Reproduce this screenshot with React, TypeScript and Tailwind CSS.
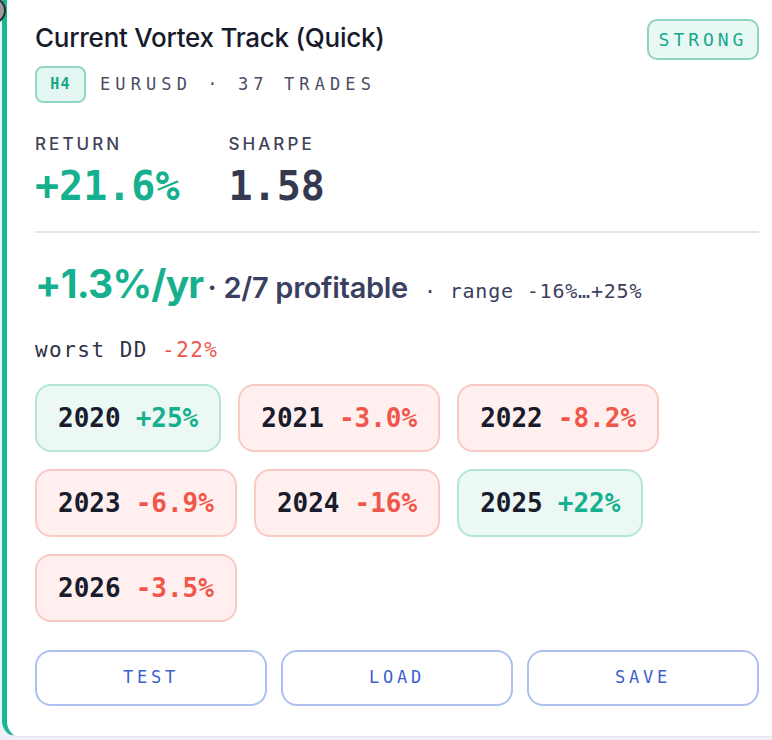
import React from 'react';

const mono = { fontFamily: '"DejaVu Sans Mono", "Liberation Mono", monospace' };
const sans = { fontFamily: 'Inter, "Noto Sans", sans-serif' };

type Year = { year: string; value: string; up: boolean };

const years: Year[] = [
  { year: '2020', value: '+25%', up: true },
  { year: '2021', value: '-3.0%', up: false },
  { year: '2022', value: '-8.2%', up: false },
  { year: '2023', value: '-6.9%', up: false },
  { year: '2024', value: '-16%', up: false },
  { year: '2025', value: '+22%', up: true },
  { year: '2026', value: '-3.5%', up: false },
];

function YearChip({ year, value, up }: Year) {
  return (
    <div
      className={`h-[68px] px-[21px] flex items-center rounded-[16px] border-2 text-[26px] font-bold ${
        up ? 'bg-[#ebf8f4] border-[#b3e6d9]' : 'bg-[#fff0ef] border-[#f9c9c3]'
      }`}
      style={mono}
    >
      <span className="text-[#191c2c]">{year}</span>
      <span className={`ml-[15px] ${up ? 'text-[#15b08e]' : 'text-[#f0574b]'}`}>{value}</span>
    </div>
  );
}

function ActionButton({ label }: { label: string }) {
  return (
    <button
      className="h-[56px] rounded-[16px] border-2 border-[#adc0f0] bg-white text-[17px] tracking-[0.22em] text-[#3b5fcc] cursor-pointer"
      style={mono}
    >
      {label}
    </button>
  );
}

export default function App() {
  return (
    <div className="relative h-[740px] w-[772px] overflow-hidden bg-[#eef0f5]" style={sans}>
      {/* stray cursor ring in the corner */}
      <div className="absolute -left-[21px] -top-[3px] z-10 h-[27px] w-[27px] rounded-full border-2 border-[#2b2b2b] bg-[#9c9c9c]" />

      <div className="ml-[2px] -mt-[20px] w-[800px] rounded-[16px] border border-[#e2e6ee] border-l-[5px] border-l-[#17b795] bg-white pl-[28px] pt-[38px] pb-[30px]">
        <div className="w-[724px]">
          {/* header */}
          <div className="flex items-start justify-between">
            <div>
              <h1 className="mt-[3px] text-[26px] leading-[32px] font-medium text-[#171a2b] tracking-[-0.01em]">
                Current Vortex Track (Quick)
              </h1>
              <div className="mt-[12px] flex items-center">
                <span
                  className="h-[37px] w-[51px] flex items-center justify-center rounded-[8px] border-2 border-[#93d6c6] bg-[#e3f6f1] text-[15px] font-bold text-[#15a888] tracking-[0.08em]"
                  style={mono}
                >
                  H4
                </span>
                <span className="ml-[14px] text-[17px] tracking-[0.3em] text-[#4a4f62]" style={mono}>
                  EURUSD · 37 TRADES
                </span>
              </div>
            </div>
            <span
              className="h-[41px] w-[112px] flex items-center justify-center rounded-[10px] border-2 border-[#8fd3c3] bg-[#e8f8f4] text-[18px] tracking-[0.22em] text-[#16a98a]"
              style={mono}
            >
              STRONG
            </span>
          </div>

          {/* headline stats */}
          <div className="mt-[31px] flex gap-[49px]">
            <div>
              <div className="text-[17px] leading-[20px] font-medium tracking-[0.18em] text-[#3e4357]">RETURN</div>
              <div className="mt-[10px] text-[40px] leading-[44px] font-bold text-[#16b08e]" style={mono}>
                +21.6%
              </div>
            </div>
            <div>
              <div className="text-[17px] leading-[20px] font-medium tracking-[0.18em] text-[#3e4357]">SHARPE</div>
              <div className="mt-[10px] text-[40px] leading-[44px] font-bold text-[#343950]" style={mono}>
                1.58
              </div>
            </div>
          </div>

          <div className="mt-[23px] h-[2px] bg-[#dfe5ee]" />

          {/* yearly summary */}
          <div className="mt-[31px] flex items-baseline h-[40px] leading-[40px]">
            <span className="text-[39px] font-bold tracking-[-0.02em] text-[#16b08e]">+1.3%/yr</span>
            <span className="ml-[4px] text-[29px] font-semibold tracking-[-0.01em] text-[#3b4060]">· 2/7 profitable</span>
            <span className="ml-[16px] text-[20px] tracking-[0.04em] text-[#3b4060]" style={mono}>
              · range -16%…+25%
            </span>
          </div>

          <div className="mt-[33px] text-[21px] leading-[26px] tracking-[0.07em] text-[#2e3244]" style={mono}>
            worst DD <span className="text-[#f0574b]">-22%</span>
          </div>

          <div className="mt-[21px] flex flex-wrap gap-[17px] w-[640px]">
            {years.map((y) => (
              <YearChip key={y.year} {...y} />
            ))}
          </div>

          <div className="mt-[28px] grid grid-cols-3 gap-[14px]">
            <ActionButton label="TEST" />
            <ActionButton label="LOAD" />
            <ActionButton label="SAVE" />
          </div>
        </div>
      </div>
    </div>
  );
}
